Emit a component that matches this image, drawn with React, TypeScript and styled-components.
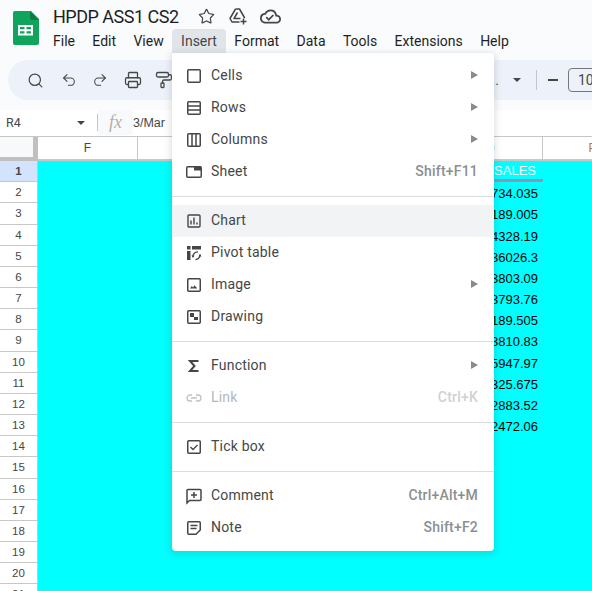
import type { ReactNode } from "react";
import styled, { createGlobalStyle } from "styled-components";
import { PaintRoller, Printer, Redo2, Search, Star, Undo2 } from "lucide-react";
import { MdOutlineCloudDone } from "react-icons/md";

const Global = createGlobalStyle`
  html, body {
    margin: 0;
    padding: 0;
    overflow: hidden;
    background: #ffffff;
    font-family: "Roboto", "Liberation Sans", sans-serif;
  }
`;

const Page = styled.div`
  position: relative;
  width: 592px;
  height: 591px;
  overflow: hidden;
  display: flex;
  flex-direction: column;
  background: #ffffff;
`;

const Top = styled.header`
  background: #f9fbfd;
  height: 110px;
  flex: none;
  overflow: hidden;
`;

const TitleBar = styled.div`
  height: 60px;
  display: flex;
  align-items: flex-start;
`;

const Logo = styled.div`
  width: 26px;
  height: 34px;
  margin: 11px 14px 0 13px;
  flex: none;
`;

const TitleCol = styled.div`
  display: flex;
  flex-direction: column;
`;

const TitleRow = styled.div`
  display: flex;
  align-items: center;
  height: 29px;
  padding-top: 3px;
  box-sizing: border-box;
`;

const Title = styled.span`
  font-size: 18px;
  letter-spacing: -0.5px;
  color: #1f1f1f;
  width: 137px;
  white-space: nowrap;
`;

const TitleIcon = styled.span`
  width: 32px;
  display: flex;
  justify-content: center;
  color: #444746;
  font-size: 21px;
`;

const MenuBar = styled.nav`
  display: flex;
  margin-left: -8.7px;
`;

const MenuName = styled.span<{ $open?: boolean }>`
  height: 24px;
  line-height: 24px;
  padding: 0 8.7px;
  font-size: 14px;
  border-radius: 4px 4px 0 0;
  background: ${(p) => (p.$open ? "#e1e5ea" : "transparent")};
  color: ${(p) => (p.$open ? "#444746" : "#1f1f1f")};
`;

const Toolbar = styled.div`
  margin-left: 8px;
  padding-left: 11px;
  width: 640px;
  height: 40px;
  background: #edf2fa;
  border-radius: 20px;
  display: flex;
  align-items: center;
`;

const ToolIcon = styled.span<{ $w: number }>`
  width: ${(p) => p.$w}px;
  display: flex;
  justify-content: center;
  color: #444746;
  flex: none;
`;

const FontName = styled.span`
  width: 324px;
  text-align: right;
  font-size: 14px;
  color: #444746;
  flex: none;
  line-height: 20px;
`;

const Caret = styled.span`
  width: 0;
  height: 0;
  margin: 0 15px 0 14px;
  border-left: 4px solid transparent;
  border-right: 4px solid transparent;
  border-top: 4px solid #444746;
  flex: none;
`;

const ToolSep = styled.span`
  width: 1px;
  height: 20px;
  background: #c7c7c7;
  flex: none;
`;

const Minus = styled.span`
  width: 10px;
  height: 2px;
  background: #444746;
  margin: 0 10px 0 11px;
  flex: none;
`;

const SizeBox = styled.span`
  width: 44px;
  height: 24px;
  box-sizing: border-box;
  border: 1px solid #747775;
  border-radius: 4px;
  font-size: 14px;
  line-height: 22px;
  padding-left: 9px;
  color: #444746;
  flex: none;
`;

const FormulaBar = styled.div`
  height: 27px;
  flex: none;
  display: flex;
  align-items: center;
  box-sizing: border-box;
  border-bottom: 1px solid #c4c7c5;
  padding-bottom: 1px;
`;

const NameBox = styled.div`
  width: 98px;
  padding: 0 12px 0 6px;
  box-sizing: border-box;
  display: flex;
  align-items: center;
  justify-content: space-between;
  font-size: 12.5px;
  color: #444746;
  border-right: 1px solid #c7c7c7;
  height: 17px;
`;

const SmallCaret = styled(Caret)`
  margin: 0;
`;

const Fx = styled.span`
  width: 35px;
  height: 25px;
  background: #f8f9fa;
  text-align: center;
  line-height: 25px;
  font-family: "Liberation Serif", serif;
  font-style: italic;
  font-size: 18px;
  color: #aeb0b2;
  flex: none;
`;

const FormulaText = styled.span`
  font-family: "Liberation Sans", sans-serif;
  font-size: 12.5px;
  color: #444746;
`;

const ColumnBar = styled.div`
  height: 24px;
  flex: none;
  display: flex;
  box-sizing: border-box;
`;

const Corner = styled.div`
  width: 38px;
  height: 24px;
  box-sizing: border-box;
  background: #f8f9fa;
  border-right: 5px solid #c0c0c0;
  border-bottom: 4px solid #c0c0c0;
  flex: none;
`;

const ColumnHead = styled.div<{ $w: number; $tint?: string }>`
  width: ${(p) => p.$w}px;
  box-sizing: border-box;
  flex: none;
  border-right: 1px solid #c7c7c7;
  border-bottom: 2px solid #c7c7c7;
  text-align: center;
  line-height: 22px;
  font-family: "Liberation Sans", sans-serif;
  font-size: 12px;
  color: ${(p) => p.$tint ?? "#444746"};
`;

const Sheet = styled.div`
  flex: 1;
  display: flex;
  flex-direction: column;
  background: #00ffff;
  overflow: hidden;
`;

const Row = styled.div`
  height: 21.18px;
  flex: none;
  display: flex;
  font-family: "Liberation Sans", sans-serif;
`;

const RowHead = styled.div<{ $active?: boolean }>`
  width: 38px;
  flex: none;
  box-sizing: border-box;
  background: ${(p) => (p.$active ? "#d3e3fd" : "#ffffff")};
  border-right: 1px solid #c7c7c7;
  border-bottom: 1px solid #c7c7c7;
  text-align: center;
  font-size: 11.5px;
  line-height: 21px;
  font-weight: ${(p) => (p.$active ? 700 : 400)};
  color: #444746;
`;

const Gap = styled.div`
  width: 400px;
  flex: none;
`;

const DataCell = styled.div<{ $head?: boolean }>`
  width: 105px;
  height: 100%;
  flex: none;
  box-sizing: border-box;
  padding: ${(p) => (p.$head ? "0 7px 0 0" : "2px 5px 0 0")};
  text-align: right;
  font-size: 13px;
  line-height: 19px;
  white-space: nowrap;
  color: ${(p) => (p.$head ? "#ffffff" : "#000000")};
  border-bottom: ${(p) => (p.$head ? "3px solid #9195b5" : "none")};
`;

const Menu = styled.div`
  position: absolute;
  left: 172px;
  top: 53px;
  width: 322px;
  box-sizing: border-box;
  padding: 7px 0;
  background: #ffffff;
  border-radius: 0 4px 4px 4px;
  box-shadow: 0 2px 6px 2px rgba(60, 64, 67, 0.15);
`;

const Item = styled.div<{ $hover?: boolean; $off?: boolean }>`
  height: 32px;
  display: flex;
  align-items: center;
  padding: 0 16px 0 13px;
  font-size: 14px;
  letter-spacing: 0.2px;
  background: ${(p) => (p.$hover ? "#f1f3f4" : "transparent")};
  color: ${(p) => (p.$off ? "#b4b7ba" : "#444746")};

  & svg {
    flex: none;
    margin-right: 8px;
  }
`;

const ItemLabel = styled.span`
  flex: 1;
  margin-bottom: 2px;
`;

const Shortcut = styled.span<{ $off?: boolean }>`
  font-weight: 500;
  margin-bottom: 2px;
  color: ${(p) => (p.$off ? "#cfd1d3" : "#8b8f94")};
`;

const Arrow = styled.span`
  width: 0;
  height: 0;
  margin-bottom: 2px;
  border-top: 4px solid transparent;
  border-bottom: 4px solid transparent;
  border-left: 7px solid #8a8a8a;
`;

const Divider = styled.div`
  height: 1px;
  background: #dadce0;
  margin: 8px 0;
`;

const Ico = ({ children, color = "#444746" }: { children: ReactNode; color?: string }) => (
  <svg width="18" height="18" viewBox="0 0 18 18" fill="none" stroke={color} strokeWidth="1.5">
    {children}
  </svg>
);

const SALES = [
  "2734.035",
  "2189.005",
  "84328.19",
  "136026.3",
  "13803.09",
  "23793.76",
  "8189.505",
  "33810.83",
  "65947.97",
  "2325.675",
  "12883.52",
  "42472.06",
];

const MENU_TOP = ["File", "Edit", "View", "Insert", "Format", "Data", "Tools", "Extensions", "Help"];

const App = () => {
  const rows = Array.from({ length: 21 }, (_, i) => i + 1);

  return (
    <Page>
      <Global />
      <Top>
        <TitleBar>
          <Logo>
            <svg width="26" height="34" viewBox="0 0 26 34">
              <path d="M2 0h16l8 8v24a2 2 0 0 1-2 2H2a2 2 0 0 1-2-2V2a2 2 0 0 1 2-2z" fill="#0fa55d" />
              <path d="M17 0l9 9h-7a2 2 0 0 1-2-2z" fill="#0a7d45" />
              <path d="M5 14h15v10.5H5zM7 16v2.2h4.5V16zM13.5 16v2.2H18V16zM7 20.2v2.3h4.5v-2.3zM13.5 20.2v2.3H18v-2.3z" fill="#fff" fillRule="evenodd" />
            </svg>
          </Logo>
          <TitleCol>
            <TitleRow>
              <Title>HPDP ASS1 CS2</Title>
              <TitleIcon><Star size={17} strokeWidth={1.7} /></TitleIcon>
              <TitleIcon>
                <svg width="20" height="20" viewBox="0 0 20 20" fill="none" stroke="#444746" strokeWidth="1.5" strokeLinejoin="round">
                  <path d="M7.5 3h4l5.2 9M7.5 3L2 12.5 4 16h7.5" />
                  <path d="M9.5 6.5L6 12.5h6.5" />
                  <path d="M15.5 12.5v6M12.5 15.5h6" />
                </svg>
              </TitleIcon>
              <TitleIcon><MdOutlineCloudDone /></TitleIcon>
            </TitleRow>
            <MenuBar>
              {MENU_TOP.map((m) => (
                <MenuName key={m} $open={m === "Insert"}>{m}</MenuName>
              ))}
            </MenuBar>
          </TitleCol>
        </TitleBar>
        <Toolbar>
          <ToolIcon $w={32}><Search size={17} strokeWidth={1.7} /></ToolIcon>
          <ToolIcon $w={36}><Undo2 size={16} strokeWidth={1.6} /></ToolIcon>
          <ToolIcon $w={26}><Redo2 size={16} strokeWidth={1.6} /></ToolIcon>
          <ToolIcon $w={40}><Printer size={18} strokeWidth={1.7} /></ToolIcon>
          <ToolIcon $w={22}><PaintRoller size={18} strokeWidth={1.7} /></ToolIcon>
          <FontName>Defaul...</FontName>
          <Caret />
          <ToolSep />
          <Minus />
          <SizeBox>10</SizeBox>
        </Toolbar>
      </Top>

      <FormulaBar>
        <NameBox>
          R4
          <SmallCaret />
        </NameBox>
        <Fx>fx</Fx>
        <FormulaText>3/Mar</FormulaText>
      </FormulaBar>

      <ColumnBar>
        <Corner />
        <ColumnHead $w={100}>F</ColumnHead>
        <ColumnHead $w={100}>G</ColumnHead>
        <ColumnHead $w={100}>H</ColumnHead>
        <ColumnHead $w={100}>I</ColumnHead>
        <ColumnHead $w={105} $tint="#00c8d0">O</ColumnHead>
        <ColumnHead $w={100} $tint="#b8792a">P</ColumnHead>
      </ColumnBar>

      <Sheet>
        {rows.map((n) => (
          <Row key={n}>
            <RowHead $active={n === 1}>{n}</RowHead>
            <Gap />
            {n === 1 ? (
              <DataCell $head>SALES</DataCell>
            ) : (
              <DataCell>{SALES[n - 2]}</DataCell>
            )}
          </Row>
        ))}
      </Sheet>

      <Menu>
        <Item>
          <Ico><rect x="2.75" y="2.75" width="12.5" height="12.5" rx="1" /></Ico>
          <ItemLabel>Cells</ItemLabel>
          <Arrow />
        </Item>
        <Item>
          <Ico>
            <rect x="2.75" y="2.75" width="12.5" height="12.5" rx="1" />
            <path d="M3 7h12M3 11h12" />
          </Ico>
          <ItemLabel>Rows</ItemLabel>
          <Arrow />
        </Item>
        <Item>
          <Ico>
            <rect x="2.75" y="2.75" width="12.5" height="12.5" rx="1" />
            <path d="M7 3v12M11 3v12" />
          </Ico>
          <ItemLabel>Columns</ItemLabel>
          <Arrow />
        </Item>
        <Item>
          <Ico>
            <rect x="1.75" y="3.75" width="14.5" height="10.5" rx="1" />
            <rect x="9" y="3.5" width="7" height="4" fill="#444746" stroke="none" />
          </Ico>
          <ItemLabel>Sheet</ItemLabel>
          <Shortcut>Shift+F11</Shortcut>
        </Item>
        <Divider />
        <Item $hover>
          <Ico>
            <rect x="3" y="3" width="12" height="12" rx="1" strokeWidth="1.4" />
            <path d="M6 12.5V8.5M9 12.5V5.5M12 12.5V10.5" strokeWidth="1.4" />
          </Ico>
          <ItemLabel>Chart</ItemLabel>
        </Item>
        <Item>
          <Ico>
            <path d="M2 2h3.5v3.5H2zM7 2h9v3.5H7zM2 7h3.5v9H2z" fill="#444746" stroke="none" />
            <path d="M8 13a4.5 4.5 0 0 1 5-5M15 10.5a4.5 4.5 0 0 1-4.5 5" strokeWidth="1.3" />
            <path d="M6.5 11.5h3L8 14zM13.5 12.5h3L15 10z" fill="#444746" stroke="none" />
          </Ico>
          <ItemLabel>Pivot table</ItemLabel>
        </Item>
        <Item>
          <Ico>
            <rect x="2.75" y="2.75" width="12.5" height="12.5" rx="1" />
            <path d="M5 12.5l1.8-2.4 1.3 1.4 1.4-2.2 2.8 3.2z" fill="#444746" stroke="none" />
          </Ico>
          <ItemLabel>Image</ItemLabel>
          <Arrow />
        </Item>
        <Item>
          <Ico>
            <rect x="2.75" y="2.75" width="12.5" height="12.5" rx="1" />
            <rect x="5" y="5" width="4" height="4" fill="#444746" stroke="none" />
            <rect x="9" y="9" width="4" height="3" fill="#444746" stroke="none" />
          </Ico>
          <ItemLabel>Drawing</ItemLabel>
        </Item>
        <Divider />
        <Item>
          <Ico>
            <path d="M13.5 4H5l4.5 5-4.5 5h8.5" strokeWidth="2" />
          </Ico>
          <ItemLabel>Function</ItemLabel>
          <Arrow />
        </Item>
        <Item $off>
          <Ico color="#bdc1c6">
            <path d="M7 6H5a3 3 0 0 0 0 6h2M11 6h2a3 3 0 0 1 0 6h-2M6 9h6" strokeWidth="1.3" />
          </Ico>
          <ItemLabel>Link</ItemLabel>
          <Shortcut $off>Ctrl+K</Shortcut>
        </Item>
        <Divider />
        <Item>
          <Ico>
            <rect x="2.75" y="2.75" width="12.5" height="12.5" rx="1" />
            <path d="M5.5 9l2.5 2.5 4.5-4.5" strokeWidth="1.4" />
          </Ico>
          <ItemLabel>Tick box</ItemLabel>
        </Item>
        <Divider />
        <Item>
          <Ico>
            <path d="M2 16V3.5a1 1 0 0 1 1-1h12a1 1 0 0 1 1 1v9a1 1 0 0 1-1 1H4.5z" />
            <path d="M9 5v6M6 8h6" />
          </Ico>
          <ItemLabel>Comment</ItemLabel>
          <Shortcut>Ctrl+Alt+M</Shortcut>
        </Item>
        <Item>
          <Ico>
            <path d="M3.75 2.75h10.5a1 1 0 0 1 1 1V11l-4.25 4.25H3.75a1 1 0 0 1-1-1V3.75a1 1 0 0 1 1-1z" />
            <path d="M5.5 6.5h7M5.5 9.5h6" />
          </Ico>
          <ItemLabel>Note</ItemLabel>
          <Shortcut>Shift+F2</Shortcut>
        </Item>
      </Menu>
    </Page>
  );
};

export default App;
